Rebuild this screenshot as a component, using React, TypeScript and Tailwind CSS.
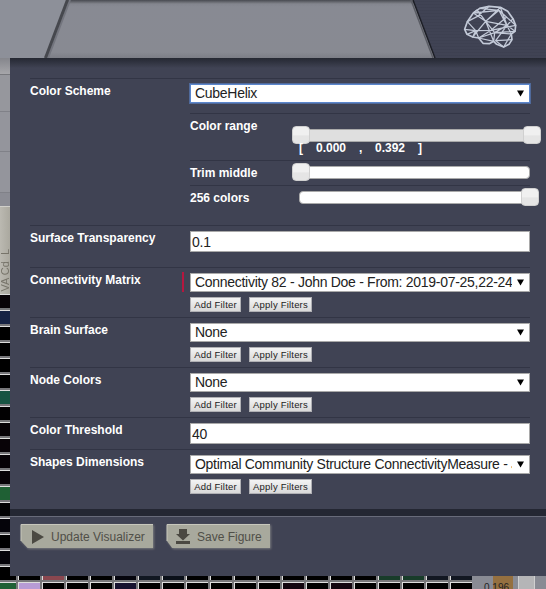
import type { ReactNode } from "react";

function Label({ children }: { children: ReactNode }) {
  return <div className="w-40 shrink-0 pt-[4px] text-[12px] leading-[16px] font-bold text-white">{children}</div>;
}

function Select({ value, active }: { value: string; active?: boolean }) {
  return (
    <div className={`flex h-[19px] w-[340px] items-center border bg-white pl-[4px] pr-[5px] text-[14px] tracking-[-0.29px] text-[#222] ${active ? "border-[#5b86cc] outline outline-[#5b86cc]/60" : "border-[#a9a9a9]"}`}>
      <span className="w-[317px] overflow-hidden whitespace-nowrap leading-[17px]">{value}</span>
      <svg className="ml-auto h-[7px] w-[7px] shrink-0" viewBox="0 0 7 7"><path d="M0 .5h7L3.5 6.5z" fill="#000" /></svg>
    </div>
  );
}

function Input({ value }: { value: string }) {
  return <div className="h-[21px] w-[340px] border border-[#a9a9a9] bg-white pl-px text-[14px] leading-[20px] tracking-[-0.2px] text-[#222]">{value}</div>;
}

function Filters() {
  const base = "flex h-[15px] items-center justify-center whitespace-nowrap border border-[#b0b0b4] bg-linear-to-b from-[#f4f4f4] to-[#d9d9d9] text-[9.5px] leading-none tracking-[0.2px] text-[#222]";
  return (
    <div className="mt-[5px] flex gap-2">
      <div className={`${base} w-[51px]`}>Add Filter</div>
      <div className={`${base} w-[63px]`}>Apply Filters</div>
    </div>
  );
}

function Row({ label, height, children, mark }: { label: string; height: string; children: ReactNode; mark?: boolean }) {
  return (
    <div className={`flex border-t border-[#323545] ${height}`}>
      <Label>{label}</Label>
      <div className="relative pt-[5px]">
        {mark && <div className="absolute top-[4px] -left-[8px] h-[20px] w-[2px] bg-[#b5173f]" />}
        {children}
      </div>
    </div>
  );
}

function Handle({ x }: { x: string }) {
  return <div className={`absolute -top-[4px] h-[18px] w-[18px] rounded-[4px] border border-[#d0d0d0] bg-linear-to-b from-[#f0f0f0] from-50% to-[#e5e5e5] to-55% ${x}`} />;
}

function Track({ tone, children }: { tone: string; children: ReactNode }) {
  return <div className={`relative ml-[109px] h-[13px] w-[231px] rounded-[4px] border border-[#aaa] ${tone}`}>{children}</div>;
}

function Brain() {
  return (
    <svg className="h-[44px] w-[56px]" viewBox="190 12 168 132" fill="none" stroke="#c3cad8" strokeWidth="5" strokeLinejoin="round">
      <path d="M195 88 203 65 221 39 240 25 268 19 302 22 324 34 340 56 348 76 346 94 335 102 337 119 328 133 312 141 291 133 282 124 269 131 250 130 237 114 219 111 202 103Z" />
      <path d="M221 39 232 30 258 64 302 22M221 39 298 31M268 19 232 50 203 65 228 92 195 88M202 103 228 92 219 111 258 64 298 31 348 76 274 91 228 92 237 114 285 98 346 94 322 76 285 98 335 102 298 31M302 22 322 76 340 56M221 39 258 64 282 124 285 98 258 64 322 76 288 122 312 141 335 102M237 114 274 91 322 50M237 114 282 124M288 122 337 119M240 25 298 31" strokeWidth="3.8" />
    </svg>
  );
}

function Action({ label, width, children }: { label: string; width: string; children: ReactNode }) {
  return (
    <div className={`relative flex h-[25px] items-center text-[12px] text-[#504f48] ${width}`}>
      <svg className="absolute inset-0 h-[28px] w-full overflow-visible drop-shadow-[1px_1px_1px_rgba(170,170,160,0.55)]" viewBox="0 0 100 28" preserveAspectRatio="none">
        <path d="M0 0H100V24H5L0 17Z" fill="#a8a99d" />
        <path d="M0 17V.5H100" fill="none" stroke="#c7c7bc" vectorEffect="non-scaling-stroke" />
      </svg>
      <span className="relative flex items-center">{children}<span className="ml-[7px] whitespace-nowrap">{label}</span></span>
    </div>
  );
}

const sideCells = ["bg-[#080307]", "bg-[#162344]", "bg-black", "bg-black", "bg-black", "bg-black", "bg-[#175443]", "bg-[#020102]", "bg-[#060206]", "bg-[#080307]", "bg-[#060206]", "bg-[#070207]", "bg-[#1f6034]", "bg-[#020203]", "bg-[#05040a]", "bg-black", "bg-[#05040a]", "bg-black"];
const topCells = ["bg-black", "bg-[#8a474f]", "bg-black", "bg-black", "bg-[#05050d]", "bg-[#111722]", "bg-[#0b1019]", "bg-black", "bg-black", "bg-black", "bg-black", "bg-black", "bg-black", "bg-black", "bg-black", "bg-[#183c2a]", "bg-[#183c2a]", "bg-[#121722]", "bg-[#121722]"];
const lowCells = ["bg-[#b79bd5]", "bg-black", "bg-black", "bg-black", "bg-[#17122f]", "bg-black", "bg-black", "bg-black", "bg-black", "bg-black", "bg-black", "bg-[#12050f]", "bg-black", "bg-[#12050f]", "bg-black", "bg-black", "bg-black", "bg-black", "bg-black"];

export default function App() {
  return (
    <div className="flex h-[589px] w-[546px] flex-col overflow-hidden bg-[#404352] font-['Liberation_Sans',Arial,sans-serif]">
      <header className="relative h-[58px] shrink-0 bg-[repeating-linear-gradient(0deg,#404354_0px,#404354_2px,#3b3e4e_3px)]">
        <svg className="absolute inset-0 h-[58px] w-[546px]" viewBox="0 0 546 58">
          <defs>
            <linearGradient id="metal" x2="0" y2="1"><stop stopColor="#7d7f88" /><stop offset=".12" stopColor="#888a93" /><stop offset=".9" stopColor="#888a92" /><stop offset="1" stopColor="#7c7e86" /></linearGradient>
            <linearGradient id="edge" x2="0" y2="1"><stop stopColor="#484a51" /><stop offset="1" stopColor="#85878f" /></linearGradient>
          </defs>
          <path d="M0 0H413L435 58H0Z" fill="url(#metal)" />
          <path d="M0 0H66L44 58H0Z" fill="#8d9099" />
          <path d="M67 0H412L414 4H66Z" fill="url(#edge)" />
          <path d="M70 0 48 58" stroke="#73757e" strokeWidth="2" />
          <path d="M67.500 0 45.500 58" stroke="#46484e" strokeWidth="3" />
          <path d="M411 0 433 58" stroke="#5a5c64" strokeWidth="1.500" />
          <path d="M413 0 435 58" stroke="#1c1e25" strokeWidth="1.500" />
        </svg>
        <div className="absolute top-[4px] left-[463px]"><Brain /></div>
      </header>
      <div className="flex h-[518px] shrink-0">
        <aside className="relative w-[10px] shrink-0 overflow-hidden bg-[#a9a9a9]">
          <div className="h-[17px] border-b border-[#77787d] bg-linear-to-b from-[#85868c] to-[#a6a6aa]" />
          <div className="h-[36px] bg-[#96979d]" />
          <div className="h-[41px] border-y border-[#808188] bg-[#94959c]" />
          <div className="h-[41px] border-b border-[#808188] bg-[#94959c]" />
          <div className="h-[13px] bg-[#8b8c94]" />
          <div className="flex h-[88px] items-end border-t border-[#d0cfca] bg-linear-to-r from-[#bbb9b1] to-[#aaa89f] pb-[2px]">
            <span className="rotate-180 text-[11px] leading-[10px] whitespace-nowrap text-[#77746a] [writing-mode:vertical-rl]">VA Cd_L</span>
          </div>
          {sideCells.map((color, i) => (
            <div key={i} className={`h-[16px] border-t border-b-2 border-t-[#ddd] border-b-[#77777a] ${color}`} />
          ))}
        </aside>
        <main className="flex w-[536px] flex-col bg-[#404354]">
          <div className="h-[20px] shrink-0 bg-linear-to-b from-[#252832] to-[#404354] to-50%" />
          <div className="ml-[20px] h-[431px] w-[500px]">
            <Row label="Color Scheme" height="h-[147px]">
              <Select value="CubeHelix" active />
              <div className="mt-[10px] h-[47px] border-t border-[#323545] text-[12px] leading-[16px] font-bold text-white">
                <div className="h-[15px] pt-[4px]">Color range</div>
                <div className="relative h-[12px]">
                  <Track tone="bg-[#dfdfdf] border-x-0">
                    <Handle x="-left-[7px]" />
                    <Handle x="left-[224px]" />
                  </Track>
                </div>
                <div className="relative ml-[109px] flex h-[14px] leading-[15px]">
                  <span className="w-[17px]">[</span><span className="w-[43px]">0.000</span><span className="w-[16px]">,</span><span className="w-[43px]">0.392</span><span>]</span>
                </div>
              </div>
              <div className="h-[25px] border-t border-[#323545] text-[12px] leading-[16px] font-bold text-white">
                <div className="flex items-start pt-[5px]"><span className="w-[109px] leading-[14px]">Trim middle</span>
                  <div className="-ml-[109px]"><Track tone="bg-white"><Handle x="-left-[8px]" /></Track></div>
                </div>
              </div>
              <div className="h-[25px] border-t border-[#323545] text-[12px] leading-[16px] font-bold text-white">
                <div className="flex items-start pt-[5px]"><span className="w-[109px] leading-[14px]">256 colors</span>
                  <div className="-ml-[109px]"><Track tone="bg-white"><Handle x="left-[221px]" /></Track></div>
                </div>
              </div>
            </Row>
            <Row label="Surface Transparency" height="h-[42px]"><Input value="0.1" /></Row>
            <Row label="Connectivity Matrix" height="h-[50px]" mark><Select value="Connectivity 82 - John Doe - From: 2019-07-25,22-24" /><Filters /></Row>
            <Row label="Brain Surface" height="h-[50px]"><Select value="None" /><Filters /></Row>
            <Row label="Node Colors" height="h-[50px]"><Select value="None" /><Filters /></Row>
            <Row label="Color Threshold" height="h-[32px]"><Input value="40" /></Row>
            <Row label="Shapes Dimensions" height="h-[60px]"><Select value="Optimal Community Structure ConnectivityMeasure - J" /><Filters /></Row>
          </div>
          <footer className="h-[67px] border-t-[7px] border-[#242733]">
            <div className="flex h-[60px] gap-[14px] border-t border-[#686b7a] pt-[7px] pl-[11px]">
              <Action label="Update Visualizer" width="w-[132px] pl-[11px]">
                <svg className="h-[14px] w-[12px] shrink-0" viewBox="0 0 12 14"><path d="M0 0 12 7 0 14Z" fill="#4b4942" /></svg>
              </Action>
              <Action label="Save Figure" width="w-[103px] pl-[9px]">
                <svg className="h-[15px] w-[14px] shrink-0" viewBox="0 0 14 15" fill="#4b4942"><path d="M3 0H11V5H14L7 11.500 0 5H3ZM0 12H14V15H0Z" /></svg>
              </Action>
            </div>
          </footer>
        </main>
      </div>
      <div className="relative h-[13px] bg-[#898b94]">
        <div className="flex h-[4px] w-[472px] overflow-hidden bg-[#77777a]">
          <div className="mr-[2px] h-full w-[16px] shrink-0 bg-black" />
          {topCells.map((color, i) => <div key={i} className={`mr-[2px] h-full w-[22px] shrink-0 border-l border-[#ddd] ${color}`} />)}
        </div>
        <div className="flex h-[9px] w-[472px] overflow-hidden bg-[#77777a] pt-[2px]">
          <div className="mr-[2px] h-full w-[16px] shrink-0 border-t border-[#ddd] bg-[#1f6034]" />
          {lowCells.map((color, i) => <div key={i} className={`mr-[2px] h-full w-[22px] shrink-0 border-t border-l border-[#ddd] ${color}`} />)}
        </div>
        <div className="absolute top-0 left-[493px] h-[13px] w-[20px] bg-[#957040]" />
        <div className="absolute top-0 left-[518px] h-[13px] w-[17px] border-x border-[#d0d0d0] bg-[#b5b5b7]" />
        <span className="absolute top-[6px] left-[484px] text-[10px] leading-[12px] text-[#222]">0.196</span>
      </div>
    </div>
  );
}
